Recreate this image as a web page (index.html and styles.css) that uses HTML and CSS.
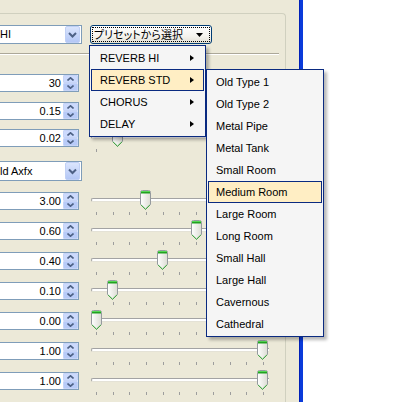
FILE: index.html
```html
<!DOCTYPE html>
<html>
<head>
<meta charset="utf-8">
<link rel="stylesheet" href="styles.css">
</head>
<body>
<div class="screen">
  <div class="client">
    <div class="group">
      <div class="toprow">
        <div class="combo">
          <span class="ctext">HI</span>
          <span class="cbtn"><svg width="15" height="17" viewBox="0 0 15 17"><defs><linearGradient id="cb" x1="0" y1="0" x2="0" y2="1"><stop offset="0" stop-color="#DCE6FD"/><stop offset="1" stop-color="#B2C6F5"/></linearGradient></defs><rect x="0.5" y="0.5" width="14" height="16" rx="1.5" fill="url(#cb)" stroke="#C0D0F5"/><polyline points="4,7 7.5,10.5 11,7" fill="none" stroke="#4D6185" stroke-width="2"/></svg></span>
        </div>
        <div class="preset">
          <div class="focus">
            <span class="ptext">プリセットから選択</span>
            <svg class="parrow" width="7" height="4" viewBox="0 0 7 4"><polygon points="0,0 7,0 3.5,4" fill="#000"/></svg>
          </div>
        </div>
      </div>
      <div class="sep"></div>
      <div class="rows">
        <div class="row">
          <div class="spin"><span class="val">30</span><span class="sbtns"><span class="sb up"></span><span class="sb dn"></span></span></div>
          <div class="slider"><div class="track"></div><div class="thumb" style="left:61px"></div></div>
        </div>
        <div class="row g10">
          <div class="spin"><span class="val">0.15</span><span class="sbtns"><span class="sb up"></span><span class="sb dn"></span></span></div>
          <div class="slider"><div class="track"></div><div class="thumb" style="left:30px"></div></div>
        </div>
        <div class="row g9">
          <div class="spin"><span class="val">0.02</span><span class="sbtns"><span class="sb up"></span><span class="sb dn"></span></span></div>
          <div class="slider s1"><div class="track"></div><div class="ticks one"><i></i></div><div class="thumb" style="left:22px"></div></div>
        </div>
        <div class="row g14">
          <div class="combo tall"><span class="ctext">ld Axfx</span><span class="cbtn"><svg width="15" height="18" viewBox="0 0 15 18"><rect x="0.5" y="0.5" width="14" height="17" rx="1.5" fill="url(#cb)" stroke="#C0D0F5"/><polyline points="4,7.5 7.5,11 11,7.5" fill="none" stroke="#4D6185" stroke-width="2"/></svg></span></div>
        </div>
        <div class="row g11">
          <div class="spin"><span class="val">3.00</span><span class="sbtns"><span class="sb up"></span><span class="sb dn"></span></span></div>
          <div class="slider"><div class="track"></div><div class="ticks"><i></i><i></i><i></i><i></i><i></i><i></i><i></i><i></i><i></i><i></i><i></i></div><div class="thumb" style="left:50px"></div></div>
        </div>
        <div class="row">
          <div class="spin"><span class="val">0.60</span><span class="sbtns"><span class="sb up"></span><span class="sb dn"></span></span></div>
          <div class="slider"><div class="track"></div><div class="ticks"><i></i><i></i><i></i><i></i><i></i><i></i><i></i><i></i><i></i><i></i><i></i></div><div class="thumb" style="left:101px"></div></div>
        </div>
        <div class="row">
          <div class="spin"><span class="val">0.40</span><span class="sbtns"><span class="sb up"></span><span class="sb dn"></span></span></div>
          <div class="slider"><div class="track"></div><div class="ticks"><i></i><i></i><i></i><i></i><i></i><i></i><i></i><i></i><i></i><i></i><i></i></div><div class="thumb" style="left:67px"></div></div>
        </div>
        <div class="row">
          <div class="spin"><span class="val">0.10</span><span class="sbtns"><span class="sb up"></span><span class="sb dn"></span></span></div>
          <div class="slider"><div class="track"></div><div class="ticks"><i></i><i></i><i></i><i></i><i></i><i></i><i></i><i></i><i></i><i></i><i></i></div><div class="thumb" style="left:17px"></div></div>
        </div>
        <div class="row">
          <div class="spin"><span class="val">0.00</span><span class="sbtns"><span class="sb up"></span><span class="sb dn"></span></span></div>
          <div class="slider"><div class="track"></div><div class="ticks"><i></i><i></i><i></i><i></i><i></i><i></i><i></i><i></i><i></i><i></i><i></i></div><div class="thumb" style="left:1px"></div></div>
        </div>
        <div class="row">
          <div class="spin"><span class="val">1.00</span><span class="sbtns"><span class="sb up"></span><span class="sb dn"></span></span></div>
          <div class="slider"><div class="track"></div><div class="ticks"><i></i><i></i><i></i><i></i><i></i><i></i><i></i><i></i><i></i><i></i><i></i></div><div class="thumb" style="left:167px"></div></div>
        </div>
        <div class="row">
          <div class="spin"><span class="val">1.00</span><span class="sbtns"><span class="sb up"></span><span class="sb dn"></span></span></div>
          <div class="slider"><div class="track"></div><div class="ticks"><i></i><i></i><i></i><i></i><i></i><i></i><i></i><i></i><i></i><i></i><i></i></div><div class="thumb" style="left:167px"></div></div>
        </div>
      </div>
    </div>
  </div>
  <div class="frame"></div>
</div>

<div class="menu m1">
  <div class="item"><span>REVERB HI</span><i class="arr"></i></div>
  <div class="item on"><span>REVERB STD</span><i class="arr"></i></div>
  <div class="item"><span>CHORUS</span><i class="arr"></i></div>
  <div class="item"><span>DELAY</span><i class="arr"></i></div>
</div>

<div class="menu m2">
  <div class="item"><span>Old Type 1</span></div>
  <div class="item"><span>Old Type 2</span></div>
  <div class="item"><span>Metal Pipe</span></div>
  <div class="item"><span>Metal Tank</span></div>
  <div class="item"><span>Small Room</span></div>
  <div class="item on"><span>Medium Room</span></div>
  <div class="item"><span>Large Room</span></div>
  <div class="item"><span>Long Room</span></div>
  <div class="item"><span>Small Hall</span></div>
  <div class="item"><span>Large Hall</span></div>
  <div class="item"><span>Cavernous</span></div>
  <div class="item"><span>Cathedral</span></div>
</div>
</body>
</html>
```

FILE: styles.css
```css
* { box-sizing: border-box; }
html, body { margin: 0; padding: 0; }
body {
  width: 405px;
  height: 402px;
  overflow: hidden;
  background: #ffffff;
  position: relative;
  font-family: "Liberation Sans", Arial, sans-serif;
  font-size: 11px;
  color: #000;
}
.screen { display: flex; height: 402px; }
.client {
  width: 299px;
  height: 402px;
  background: #ECE9D8;
  padding-top: 13px;
}
.frame {
  width: 4px;
  height: 402px;
  background: linear-gradient(to right, #0020B8 0, #0020B8 1px, #0A3BDA 1px);
}
.group {
  width: 286px;
  height: 389px;
  border-top: 1px solid #D0D0BF;
  border-right: 1px solid #D0D0BF;
  border-top-right-radius: 4px;
}
.toprow { display: flex; align-items: flex-start; margin-top: 11px; }
.combo {
  width: 82px;
  height: 19px;
  background: #fff;
  border: 1px solid #7F9DB9;
  border-left: none;
  display: flex;
  align-items: center;
  justify-content: space-between;
  padding-right: 1px;
}
.combo.tall { height: 20px; }
.ctext { padding-left: 0; line-height: 13px; }
.cbtn { display: block; height: 17px; }
.combo.tall .cbtn { height: 18px; }
.cbtn svg { display: block; }
.preset {
  margin-left: 8px;
  width: 122px;
  height: 19px;
  border: 1px solid #003C74;
  border-radius: 3px;
  background: linear-gradient(to bottom, #FFFFFF 0%, #F4F3EE 60%, #E3E1D6 100%);
  padding: 1px;
}
.focus {
  height: 15px;
  border: 1px dotted #000;
  display: flex;
  align-items: center;
  justify-content: space-between;
  padding: 0 6px 0 1px;
}
.ptext {
  font-family: "Noto Sans CJK JP", "Liberation Sans", sans-serif;
  font-size: 11px;
  line-height: 13px;
  font-feature-settings: "palt";
  letter-spacing: 0;
}
.parrow { display: block; }
.sep {
  margin-top: 9px;
  width: 279px;
  height: 2px;
  border-top: 1px solid #ACA899;
  border-bottom: 1px solid #FFFFFF;
}
.rows { padding-top: 19px; }
.row { display: flex; align-items: flex-start; margin-top: 12px; }
.row:first-child { margin-top: 0; }
.row.g10 { margin-top: 10px; }
.row.g9 { margin-top: 9px; }
.row.g14 { margin-top: 14px; }
.row.g11 { margin-top: 11px; }
.spin {
  width: 79px;
  height: 18px;
  background: #fff;
  border: 1px solid #7F9DB9;
  border-left: none;
  display: flex;
  align-items: center;
  justify-content: flex-end;
}
.val { padding-right: 2px; line-height: 13px; }
.sbtns { display: flex; flex-direction: column; width: 15px; height: 16px; }
.sb {
  display: block;
  height: 8px;
  border: 1px solid #C6D4F7;
  border-radius: 1px;
  background-color: #C3D3FD;
  background-repeat: no-repeat;
  background-position: center;
}
.sb.up {
  background-image: url("data:image/svg+xml;utf8,<svg xmlns='http://www.w3.org/2000/svg' width='7' height='4'><polyline points='0.5,3.5 3.5,0.8 6.5,3.5' fill='none' stroke='%234D6185' stroke-width='1.6'/></svg>");
  background-color: #CCDAFD;
}
.sb.dn {
  background-image: url("data:image/svg+xml;utf8,<svg xmlns='http://www.w3.org/2000/svg' width='7' height='4'><polyline points='0.5,0.5 3.5,3.2 6.5,0.5' fill='none' stroke='%234D6185' stroke-width='1.6'/></svg>");
  background-color: #B8CBF8;
}
.slider {
  position: relative;
  margin-left: 11px;
  width: 190px;
  height: 18px;
}
.track {
  position: absolute;
  left: 1px;
  top: 6px;
  width: 178px;
  height: 4px;
  border-top: 1px solid #A3A3A3;
  border-left: 1px solid #A3A3A3;
  border-radius: 2px 0 0 2px;
  background: #FFFFFF;
  border-bottom: 1px solid #E4E2D6;
}
.ticks {
  position: absolute;
  left: 6px;
  top: 20px;
  width: 168px;
  height: 3px;
  display: flex;
  justify-content: space-between;
}
.ticks i { display: block; width: 1px; height: 3px; background: #9D9D9D; }
.ticks.one { width: 1px; }
.thumb {
  position: absolute;
  top: -2px;
  width: 11px;
  height: 20px;
  background-image: url("data:image/svg+xml;utf8,<svg xmlns='http://www.w3.org/2000/svg' width='11' height='20'><defs><linearGradient id='g' x1='0' y1='0' x2='1' y2='0'><stop offset='0' stop-color='%23FFFFFF'/><stop offset='1' stop-color='%23DCDCD4'/></linearGradient></defs><path d='M0.5,2.5 Q0.5,0.5 2.5,0.5 H8.5 Q10.5,0.5 10.5,2.5 V14.5 L5.5,19.5 L0.5,14.5 Z' fill='url(%23g)' stroke='%23959A9E'/><rect x='1' y='1' width='9' height='1' fill='%2355D855'/><rect x='1' y='2' width='9' height='1.5' fill='%2321A121'/><polyline points='1.2,15 5.5,19.2 9.8,15' fill='none' stroke='%232FA82F' stroke-width='1'/></svg>");
}
.menu {
  position: absolute;
  background: #F5F5F5;
  border: 1px solid #0A2A80;
  padding: 1px;
  box-shadow: 3px 3px 3px rgba(0, 0, 0, 0.28);
}
.m1 { left: 89px; top: 45px; width: 117px; }
.m2 { left: 206px; top: 69px; width: 118px; }
.item {
  height: 22px;
  border: 1px solid transparent;
  display: flex;
  align-items: center;
  justify-content: space-between;
  padding: 0 9px 0 8px;
  line-height: 13px;
}
.m2 .item { padding-left: 7px; }
.item.on { background: #FFEEC4; border-color: #0A2A80; }
.arr {
  display: block;
  width: 0;
  height: 0;
  border-top: 3.5px solid transparent;
  border-bottom: 3.5px solid transparent;
  border-left: 4px solid #000;
}
```
